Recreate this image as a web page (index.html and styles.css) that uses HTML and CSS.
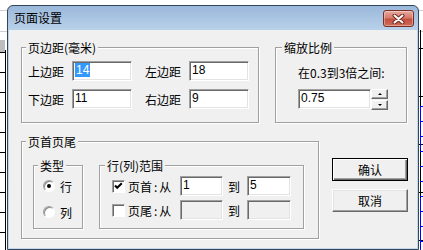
FILE: index.html
```html
<!DOCTYPE html>
<html lang="zh-CN">
<head>
    <meta charset="UTF-8">
    <title>页面设置</title>
    <link rel="stylesheet" href="styles.css">
</head>
<body>
    <div class="dialog">
        <div class="titlebar">
            <span class="title">页面设置</span>
            <button class="close" title="关闭">
                <svg width="13" height="10" viewBox="0 0 13 10">
                    <path d="M2.5 1.5 L10.5 8.5 M10.5 1.5 L2.5 8.5" stroke="#6b2a20" stroke-width="4" stroke-linecap="round"/>
                    <path d="M2.5 1.5 L10.5 8.5 M10.5 1.5 L2.5 8.5" stroke="#fff" stroke-width="2" stroke-linecap="round"/>
                </svg>
            </button>
        </div>

        <div class="client">
            <!-- margins + zoom -->
            <div class="top-row">
                <fieldset class="group margins">
                    <legend>页边距(毫米)</legend>
                    <div class="margin-grid">
                        <label>上边距</label><div class="field"><span class="selected">14</span></div>
                        <label class="right">左边距</label><div class="field">18</div>
                        <label>下边距</label><div class="field">11</div>
                        <label class="right">右边距</label><div class="field">9</div>
                    </div>
                </fieldset>

                <fieldset class="group scale">
                    <legend>缩放比例</legend>
                    <div class="scale-body">
                        <div class="hint">在0.3到3倍之间:</div>
                        <div class="spin">
                            <div class="field">0.75</div>
                            <div class="spin-buttons">
                                <button class="spin-btn"><i class="arrow up"></i></button>
                                <button class="spin-btn"><i class="arrow down"></i></button>
                            </div>
                        </div>
                    </div>
                </fieldset>
            </div>

            <!-- header / footer -->
            <div class="bottom-row">
                <fieldset class="group header-footer">
                    <legend>页首页尾</legend>
                    <div class="hf-body">
                        <fieldset class="group type">
                            <legend>类型</legend>
                            <div class="type-body">
                                <div class="option"><span class="radio checked"></span>行</div>
                                <div class="option"><span class="radio"></span>列</div>
                            </div>
                        </fieldset>

                        <fieldset class="group range">
                            <legend>行(列)范围</legend>
                            <div class="range-body">
                                <div class="range-row">
                                    <span class="check">
                                        <svg width="11" height="11" viewBox="0 0 11 11"><path d="M2 4.5 L4.2 6.8 L8.8 2.2" fill="none" stroke="#000" stroke-width="2"/></svg>
                                    </span>
                                    <span class="range-label">页首<span class="colon">:</span>从</span>
                                    <div class="field small">1</div>
                                    <span class="to">到</span>
                                    <div class="field small">5</div>
                                </div>
                                <div class="range-row">
                                    <span class="check"></span>
                                    <span class="range-label">页尾<span class="colon">:</span>从</span>
                                    <div class="field small disabled"></div>
                                    <span class="to">到</span>
                                    <div class="field small disabled"></div>
                                </div>
                            </div>
                        </fieldset>
                    </div>
                </fieldset>

                <div class="actions">
                    <button class="btn default">确认</button>
                    <button class="btn">取消</button>
                </div>
            </div>
        </div>
    </div>
</body>
</html>
```

FILE: styles.css
```css
* {
    box-sizing: border-box;
}
body {
    margin: 0;
    height: 250px;
    overflow: hidden;
    font-family: "Noto Sans CJK SC", sans-serif;
    font-size: 12px;
    color: #000;
    background-color: #fff;
    /* the sheet behind the dialog */
    background-image:
        linear-gradient(#00f, #00f),
        linear-gradient(#00f, #00f),
        repeating-linear-gradient(#00f 0 1px, transparent 1px 15px),
        linear-gradient(#000, #000),
        repeating-linear-gradient(#000 0 1px, transparent 1px 20px),
        linear-gradient(#bdbdbd, #bdbdbd),
        linear-gradient(#000, #000),
        repeating-linear-gradient(#000 0 1px, transparent 1px 48px),
        linear-gradient(#d0d0d0, #d0d0d0),
        linear-gradient(#d0d0d0, #d0d0d0);
    background-repeat: no-repeat;
    background-position:
        420px 106px, 420px 198px, 420px 106px,
        5px 50px, 0 52px, 0 40px,
        420px 30px, 419px 48px,
        0 10px, 0 31px;
    background-size:
        1px 44px, 1px 52px, 3px 150px,
        1px 200px, 5px 200px, 5px 12px,
        1px 220px, 4px 200px,
        100% 1px, 100% 1px;
}
button {
    font: inherit;
    color: inherit;
    padding: 0;
    cursor: pointer;
}

/* window frame */
.dialog {
    width: 412px;
    height: 245px;
    margin: 5px 0 0 7px;
    border: 1px solid #34465a;
    border-radius: 6px 6px 0 0;
    padding: 0 1px 1px;
    background: linear-gradient(#9ab8da, #b9d1ea 24px, #c4d8ed);
    display: flex;
    flex-direction: column;
}
.titlebar {
    height: 24px;
    display: flex;
    justify-content: space-between;
    align-items: flex-start;
    padding: 0 3px 0 5px;
}
.title {
    line-height: 24px;
}
.close {
    margin-top: 4px;
    width: 31px;
    height: 17px;
    border: 1px solid #7c2d22;
    border-radius: 3px;
    background: linear-gradient(#e9aa9f, #d77a6b 45%, #c5503f 55%, #cf6b58);
    box-shadow: inset 0 0 0 1px rgba(255, 255, 255, 0.35);
    display: flex;
    align-items: center;
    justify-content: center;
}
.client {
    flex: 1;
    background: #f0f0f0;
    padding: 11px 9px 0 12px;
}

/* group boxes */
.group {
    margin: 0;
    padding: 0;
    min-width: 0;
    border: 1px solid #a0a0a0;
    box-shadow: 1px 1px 0 #fff, inset 1px 1px 0 #fff;
}
.group legend {
    padding: 0 2px;
    margin-left: 4px;
    line-height: 13px;
    background: #f0f0f0;
}

/* sunken edit box */
.field {
    height: 20px;
    background: #fff;
    border: 1px solid;
    border-color: #a0a0a0 #fff #fff #a0a0a0;
    box-shadow: inset 1px 1px 0 #696969, inset -1px -1px 0 #e3e3e3;
    padding: 0 2px;
    line-height: 17px;
    font-family: "Liberation Sans", sans-serif;
    white-space: nowrap;
}
.field.disabled {
    background: #f0f0f0;
}
.selected {
    display: inline-block;
    height: 14px;
    line-height: 14px;
    margin-top: 1px;
    vertical-align: top;
    padding: 0 1px;
    background: #3399ff;
    color: #fff;
}

.top-row {
    display: flex;
    gap: 16px;
}
.margins {
    width: 238px;
}
.margin-grid {
    display: grid;
    grid-template-columns: 44px 60px 57px 60px;
    row-gap: 8px;
    align-items: center;
    padding: 7px 0 13px 6px;
}
.margin-grid .right {
    margin-left: 13px;
}
.scale {
    width: 132px;
}
.scale legend {
    margin-left: 6px;
}
.scale-body {
    padding: 12px 0 0 22px;
}
.hint {
    line-height: 14px;
}
.spin {
    display: flex;
    margin-top: 9px;
}
.spin .field {
    width: 73px;
}
.spin-buttons {
    display: flex;
    flex-direction: column;
    gap: 1px;
}
.spin-btn {
    width: 17px;
    height: 10px;
    background: #f0f0f0;
    border: 1px solid;
    border-color: #fff #696969 #696969 #fff;
    box-shadow: inset -1px -1px 0 #a0a0a0;
    display: flex;
    align-items: center;
    justify-content: center;
}
.arrow {
    width: 0;
    height: 0;
    border-left: 2px solid transparent;
    border-right: 2px solid transparent;
}
.arrow.up {
    border-bottom: 2px solid #000;
}
.arrow.down {
    border-top: 2px solid #000;
}

.bottom-row {
    display: flex;
    margin-top: 12px;
}
.header-footer {
    width: 298px;
}
.hf-body {
    display: flex;
    gap: 16px;
    padding: 11px 14px 9px 11px;
}
.type {
    width: 50px;
}
.type-body {
    display: flex;
    flex-direction: column;
    gap: 6px;
    padding: 4px 0 5px 9px;
}
.option {
    height: 20px;
    display: flex;
    align-items: center;
    gap: 5px;
}
.radio {
    width: 12px;
    height: 12px;
    border-radius: 50%;
    background: #fff;
    border: 1px solid;
    border-color: #a0a0a0 #fff #fff #a0a0a0;
    box-shadow: inset 1px 1px 0 #8a8a8a;
    display: grid;
    place-items: center;
}
.radio.checked::after {
    content: '';
    width: 4px;
    height: 4px;
    border-radius: 50%;
    background: #000;
}
.range {
    width: 205px;
}
.range legend {
    margin-left: 5px;
}
.range-body {
    display: flex;
    flex-direction: column;
    gap: 4px;
    padding: 4px 0 8px 12px;
}
.range-row {
    height: 20px;
    display: flex;
    align-items: center;
}
.check {
    width: 13px;
    height: 13px;
    margin-right: 3px;
    background: #fff;
    border: 1px solid;
    border-color: #a0a0a0 #fff #fff #a0a0a0;
    box-shadow: inset 1px 1px 0 #696969;
    display: flex;
}
.range-label {
    width: 44px;
    margin-right: 8px;
    white-space: nowrap;
}
.colon {
    margin: 0 2px;
}
.field.small {
    width: 43px;
}
.field.small:last-child {
    width: 44px;
}
.to {
    margin: 0 7px 0 5px;
}

/* push buttons */
.actions {
    display: flex;
    flex-direction: column;
    gap: 8px;
    margin-left: 13px;
    padding-top: 23px;
}
.btn {
    width: 76px;
    height: 23px;
    background: #f0f0f0;
    border: 1px solid;
    border-color: #fff #696969 #696969 #fff;
    box-shadow: inset -1px -1px 0 #a0a0a0, inset 1px 1px 0 #e3e3e3;
}
.btn.default {
    border: 1px solid #000;
    box-shadow: inset 1px 1px 0 #fff, inset -1px -1px 0 #696969, inset -2px -2px 0 #a0a0a0;
}
```
